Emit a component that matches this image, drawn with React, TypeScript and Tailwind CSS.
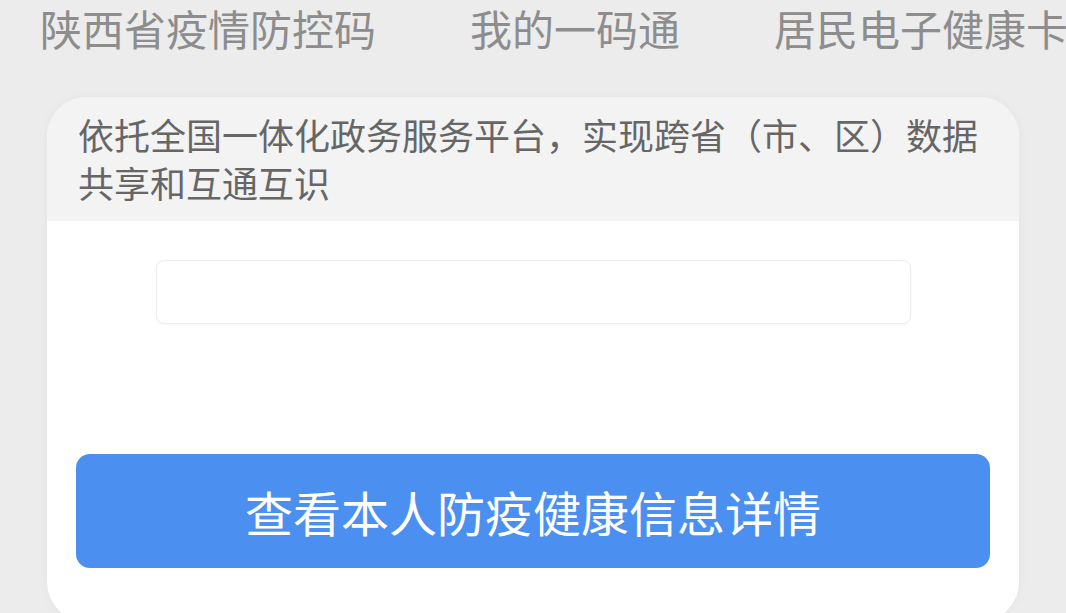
const tabs = ["陕西省疫情防控码", "我的一码通", "居民电子健康卡"];

export default function App() {
  return (
    <main
      className="h-[613px] w-[1066px] overflow-hidden bg-[#ececec]"
      style={{ fontFamily: '"Noto Sans CJK SC", "Noto Sans", sans-serif' }}
    >
      {/* Tabs */}
      <nav className="flex h-[58px] gap-[94px] whitespace-nowrap pl-[40px] pt-[3px] text-[42px] leading-[50px] text-[#8d8d8d]">
        {tabs.map((t) => (
          <span key={t} className="shrink-0">
            {t}
          </span>
        ))}
      </nav>

      {/* Card */}
      <section className="mx-[47px] mt-[39px] w-[972px] overflow-hidden rounded-[40px] bg-white shadow-[0_0_12px_rgba(0,0,0,0.04)]">
        <div className="bg-[#f3f3f3] pl-[31px] pr-[20px] pt-[13px] pb-[15px] text-[36px] leading-[48px] text-[#666666]">
          <p>依托全国一体化政务服务平台，实现跨省（市、区）数据</p>
          <p>共享和互通互识</p>
        </div>

        <div className="flex flex-col px-[29px] pt-[39px] pb-[54px]">
          <div className="mx-auto h-[64px] w-[755px] rounded-[8px] border border-[#ececec] bg-white shadow-[0_1px_3px_rgba(0,0,0,0.04)]" />

          <button className="mt-[130px] flex h-[114px] w-[914px] items-center justify-center rounded-[14px] bg-[#4b8ff0] text-[48px] leading-none text-white">
            查看本人防疫健康信息详情
          </button>
        </div>
      </section>
    </main>
  );
}
